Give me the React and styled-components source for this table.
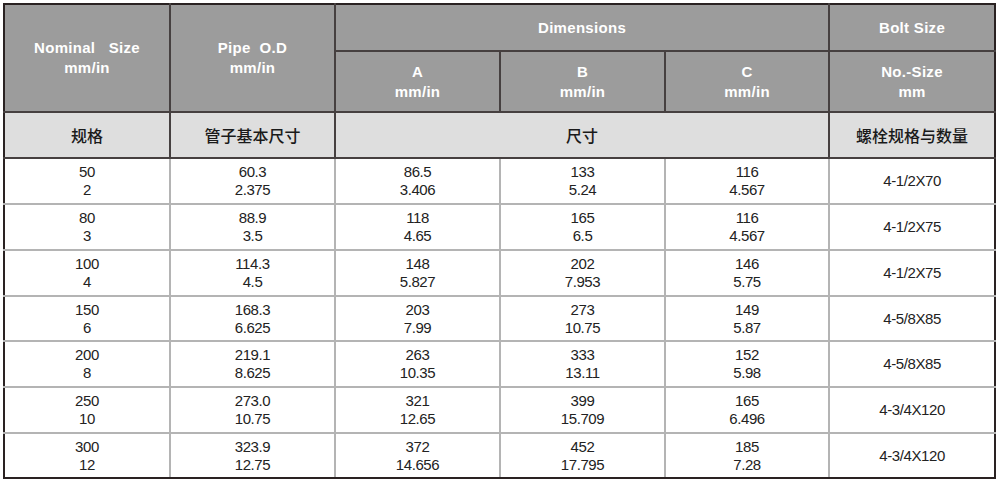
import React from "react";
import styled, { createGlobalStyle } from "styled-components";

const rows = [
  ["50", "2", "60.3", "2.375", "86.5", "3.406", "133", "5.24", "116", "4.567", "4-1/2X70"],
  ["80", "3", "88.9", "3.5", "118", "4.65", "165", "6.5", "116", "4.567", "4-1/2X75"],
  ["100", "4", "114.3", "4.5", "148", "5.827", "202", "7.953", "146", "5.75", "4-1/2X75"],
  ["150", "6", "168.3", "6.625", "203", "7.99", "273", "10.75", "149", "5.87", "4-5/8X85"],
  ["200", "8", "219.1", "8.625", "263", "10.35", "333", "13.11", "152", "5.98", "4-5/8X85"],
  ["250", "10", "273.0", "10.75", "321", "12.65", "399", "15.709", "165", "6.496", "4-3/4X120"],
  ["300", "12", "323.9", "12.75", "372", "14.656", "452", "17.795", "185", "7.28", "4-3/4X120"],
];

export default function App() {
  return (
    <>
      <GlobalStyle />
      <Table>
        <colgroup>
          <col style={{ width: 166 }} />
          <col style={{ width: 165 }} />
          <col style={{ width: 165 }} />
          <col style={{ width: 165 }} />
          <col style={{ width: 164 }} />
          <col style={{ width: 166 }} />
        </colgroup>
        <thead>
          <Row $h={47}>
            <HeadCell rowSpan={2}>
              Nominal&nbsp;&nbsp; Size
              <br />
              mm/in
            </HeadCell>
            <HeadCell rowSpan={2}>
              Pipe&nbsp; O.D
              <br />
              mm/in
            </HeadCell>
            <HeadCell colSpan={3}>Dimensions</HeadCell>
            <HeadCell>Bolt Size</HeadCell>
          </Row>
          <Row $h={61}>
            <HeadCell>
              A
              <br />
              mm/in
            </HeadCell>
            <HeadCell>
              B
              <br />
              mm/in
            </HeadCell>
            <HeadCell>
              C
              <br />
              mm/in
            </HeadCell>
            <HeadCell>
              No.-Size
              <br />
              mm
            </HeadCell>
          </Row>
          <Row $h={46}>
            <CnCell>规格</CnCell>
            <CnCell>管子基本尺寸</CnCell>
            <CnCell colSpan={3}>尺寸</CnCell>
            <CnCell>螺栓规格与数量</CnCell>
          </Row>
        </thead>
        <tbody>
          {rows.map((r, i) => (
            <Row key={r[0]} $h={i === 3 || i === 6 ? 45 : 46}>
              {[0, 2, 4, 6, 8].map((k) => (
                <DataCell key={k}>
                  {r[k]}
                  <br />
                  {r[k + 1]}
                </DataCell>
              ))}
              <DataCell>{r[10]}</DataCell>
            </Row>
          ))}
        </tbody>
      </Table>
    </>
  );
}

const GlobalStyle = createGlobalStyle`
  body {
    margin: 0;
    background: #ffffff;
    font-family: "Liberation Sans", Arial, sans-serif;
  }
`;

const Table = styled.table`
  margin: 3px 0 0 3px;
  width: 991px;
  table-layout: fixed;
  border-collapse: collapse;
  border: 2px solid #2a2222;
`;

const Row = styled.tr`
  height: ${(p) => p.$h}px;
`;

const Cell = styled.td`
  padding: 0;
  text-align: center;
  vertical-align: middle;

  &:first-child {
    border-left-color: #2a2222;
  }
  &:last-child {
    border-right-color: #2a2222;
  }
`;

const HeadCell = styled(Cell).attrs({ as: "th" })`
  background: #9c9c9c;
  color: #ffffff;
  font-size: 15px;
  font-weight: 700;
  letter-spacing: 0.3px;
  line-height: 20px;
  border: 2px solid #464040;

  tr:first-child > & {
    border-top-color: #2a2222;
  }
`;

const CnCell = styled(Cell)`
  background: #dedede;
  color: #1a1a1a;
  font-family: "Noto Sans CJK SC", sans-serif;
  font-size: 16px;
  font-weight: 500;
  border: 2px solid #464040;
`;

const DataCell = styled(Cell)`
  color: #222222;
  font-size: 15px;
  letter-spacing: -0.4px;
  line-height: 18px;
  border: 2px solid #b4b4b4;

  tr:last-child > & {
    border-bottom-color: #2a2222;
  }
`;
